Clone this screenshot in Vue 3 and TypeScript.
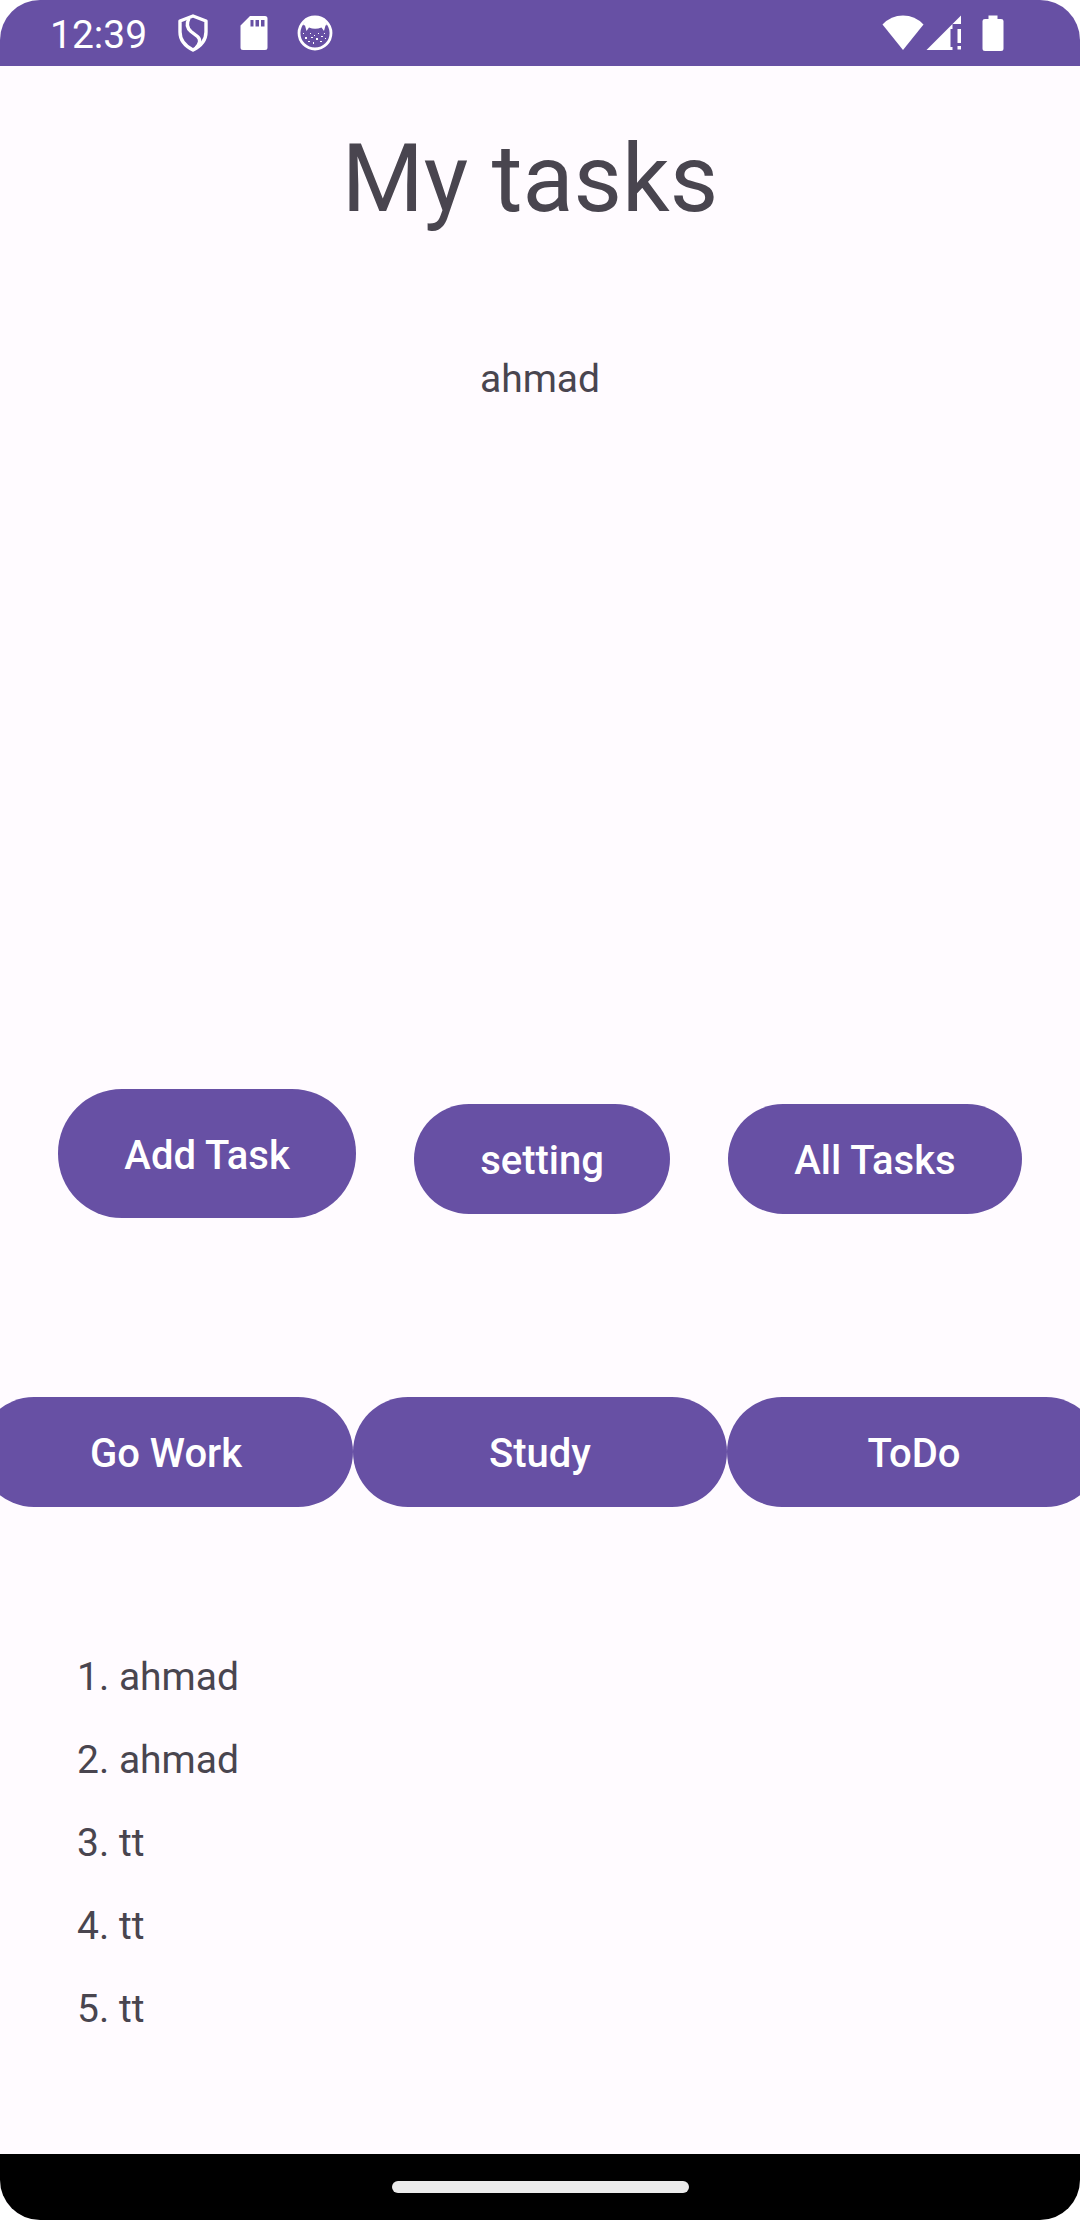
<script setup lang="ts">
interface Action {
  label: string
  large?: boolean
}

const user = 'ahmad'
const actions: Action[] = [
  { label: 'Add Task', large: true },
  { label: 'setting' },
  { label: 'All Tasks' },
]
const categories: string[] = ['Go Work', 'Study', 'ToDo']
const tasks: string[] = ['ahmad', 'ahmad', 'tt', 'tt', 'tt']
</script>

<template>
  <div class="screen">
    <header class="status">
      <span class="clock">12:39</span>
      <svg class="icon shield" viewBox="0 0 32 38" width="32" height="38" aria-hidden="true">
        <path d="M16 2 L29 7 V18 C29 26 24 32 16 36 C8 32 3 26 3 18 V7 Z" fill="none" stroke="#fff" stroke-width="3.4" stroke-linejoin="round" />
        <path d="M12 4.500 C9.500 9 10 14 14 17.500 L20.500 22.500 C24 25.500 23 30 19 34" fill="none" stroke="#fff" stroke-width="3.400" />
      </svg>
      <svg class="icon card" viewBox="0 0 28 36" width="28" height="36" aria-hidden="true">
        <path fill="#fff" fill-rule="evenodd" d="M10 1 H25 Q27.500 1 27.500 3.500 V32.500 Q27.500 35 25 35 H3 Q0.500 35 0.500 32.500 V10.500 Z M10.500 5 V11.500 H13.500 V5 Z M15.500 5 V11.500 H19 V5 Z M21 5 V11.500 H24.500 V5 Z" />
      </svg>
      <svg class="icon face" viewBox="0 0 36 36" width="36" height="36" aria-hidden="true">
        <circle cx="18" cy="18" r="16" fill="none" stroke="#fff" stroke-width="2.800" />
        <path fill="#fff" d="M6 10 Q10 2 18 2 Q26 2 30 10 L28.500 10.500 L27 16 L24.500 12.500 Q18 15 12 12.500 L9.500 16 L8 10.500 Z" />
        <g fill="#fff">
          <rect x="8" y="22" width="2" height="2" />
          <rect x="13" y="18" width="1" height="1" />
          <rect x="21" y="18" width="1" height="1" />
          <rect x="6" y="18" width="1" height="1" />
          <rect x="11" y="26" width="2" height="1" />
          <rect x="14" y="22" width="2" height="1" />
          <rect x="17" y="20" width="1" height="1" />
          <rect x="19" y="23" width="2" height="2" />
          <rect x="16" y="27" width="1" height="2" />
          <rect x="24" y="21" width="2" height="1" />
          <rect x="27" y="18" width="1" height="1" />
          <rect x="23" y="26" width="2" height="1" />
          <rect x="28" y="23" width="1" height="1" />
        </g>
      </svg>
      <span class="spacer"></span>
      <svg class="icon" viewBox="0 0 42 36" width="42" height="36" aria-hidden="true">
        <path fill="#fff" d="M0.500 9.500 Q9 0.500 21 0.500 Q33 0.500 41.500 9.500 L21 35 Z" />
      </svg>
      <svg class="icon signal" viewBox="0 0 36 36" width="36" height="36" aria-hidden="true">
        <path fill="#fff" d="M35 0.500 V9 H26.500 V14 H24.500 V32 H26.500 V35 H0.500 Z" />
        <path fill="#fff" d="M31.500 14 H35 V28 H31.500 Z M31.500 31 H35 V34.500 H31.500 Z" />
      </svg>
      <svg class="icon battery" viewBox="0 0 22 36" width="22" height="36" aria-hidden="true">
        <path fill="#fff" d="M6.500 0.500 H15.500 V4 H19 Q21.500 4 21.500 6 V33.500 Q21.500 36 19 36 H3 Q0.500 36 0.500 33.500 V6 Q0.500 4 3 4 H6.500 Z" />
      </svg>
    </header>

    <main class="content">
      <h1 class="title">My tasks</h1>
      <p class="user">{{ user }}</p>

      <div class="actions">
        <button
          v-for="action in actions"
          :key="action.label"
          type="button"
          class="button"
          :class="{ large: action.large }"
        >
          {{ action.label }}
        </button>
      </div>

      <div class="categories">
        <button v-for="name in categories" :key="name" type="button" class="button">
          {{ name }}
        </button>
      </div>

      <ol class="tasks">
        <li v-for="(task, index) in tasks" :key="index">{{ index + 1 }}. {{ task }}</li>
      </ol>
    </main>

    <footer class="nav">
      <span class="handle"></span>
    </footer>
  </div>
</template>

<style>
body {
  margin: 0;
  background: #fff;
}
</style>

<style scoped>
.screen {
  display: flex;
  flex-direction: column;
  min-height: 100vh;
  overflow: hidden;
  border-radius: 40px;
  background: #fffbff;
  color: #49454f;
  font-family: Roboto, sans-serif;
  font-size: 39px;
  line-height: 46px;
}

.status {
  display: flex;
  align-items: center;
  box-sizing: border-box;
  height: 66px;
  padding: 0 76px 0 50px;
  background: #6750a4;
  color: #fff;
}

.clock {
  padding-top: 3px;
}

.icon {
  display: block;
  flex: none;
}

.shield {
  margin-left: 30px;
}

.card {
  margin-left: 31px;
}

.face {
  margin-left: 29px;
}

.spacer {
  flex: 1;
}

.signal {
  margin-left: 2px;
}

.battery {
  margin-left: 20px;
}

.content {
  flex: 1;
  display: flex;
  flex-direction: column;
}

.title {
  margin: 58px 0 0;
  padding-right: 20px;
  font-size: 94px;
  font-weight: 400;
  line-height: 110px;
  text-align: center;
}

.user {
  margin: 122px 0 0;
  text-align: center;
}

.actions {
  display: flex;
  justify-content: space-evenly;
  align-items: flex-start;
  margin-top: 687px;
}

.button {
  padding: 34px 66px 30px;
  border: 0;
  border-radius: 64px;
  background: #6750a4;
  color: #fff;
  font-family: inherit;
  font-size: 40px;
  font-weight: 500;
  line-height: 46px;
  text-align: center;
  white-space: nowrap;
}

.actions .button {
  margin: 15px 0 0;
}

.actions .large {
  margin: 0;
  padding: 44px 66px 39px;
}

.categories {
  display: flex;
  margin: 179px -21px 0;
}

.categories .button {
  flex: 1 1 0;
}

.tasks {
  margin: 129px 0 0;
  padding: 0 77px;
  list-style: none;
  line-height: 83px;
}

.nav {
  display: flex;
  align-items: center;
  justify-content: center;
  height: 66px;
  background: #000;
}

.handle {
  width: 297px;
  height: 12px;
  border-radius: 6px;
  background: #ebebeb;
}
</style>
